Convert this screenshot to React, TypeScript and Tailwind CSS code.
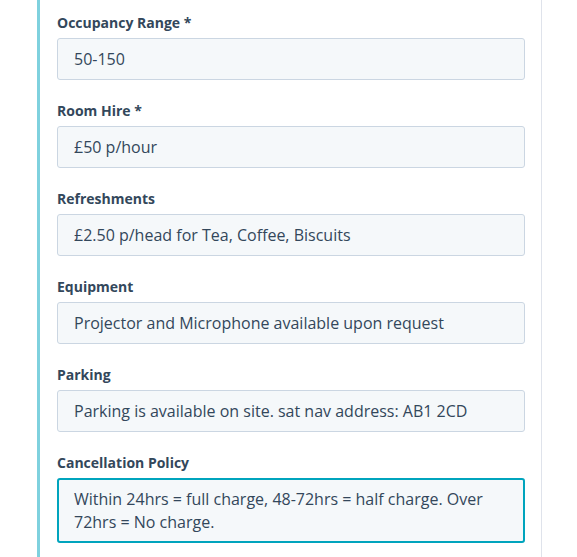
import React from "react";

const fields: { label: string; value: string }[] = [
  { label: "Occupancy Range *", value: "50-150" },
  { label: "Room Hire *", value: "£50 p/hour" },
  { label: "Refreshments", value: "£2.50 p/head for Tea, Coffee, Biscuits" },
  { label: "Equipment", value: "Projector and Microphone available upon request" },
  { label: "Parking", value: "Parking is available on site. sat nav address: AB1 2CD" },
];

export default function App() {
  return (
    <div
      className="w-[577px] h-[557px] bg-white flex overflow-hidden"
      style={{ fontFamily: "'Open Sans', 'Noto Sans', sans-serif" }}
    >
      <div className="w-[37px] shrink-0" />
      <div className="w-[3px] shrink-0 bg-[#7fd1de]" />
      <div className="w-[502px] shrink-0 border-r border-[#dfe3eb] pl-[17px] pr-[16px] pt-[13px]">
        {fields.map((f) => (
          <div key={f.label} className="mb-[21px]">
            <div className="h-[20px] leading-[20px] text-[14px] font-bold text-[#33475b] mb-[5px]">
              {f.label}
            </div>
            <div className="h-[42px] rounded-[3px] border border-[#cbd6e2] bg-[#f5f8fa] px-[16px] flex items-center text-[16px] text-[#33475b]">
              {f.value}
            </div>
          </div>
        ))}
        <div>
          <div className="h-[20px] leading-[20px] text-[14px] font-bold text-[#33475b] mb-[5px]">
            Cancellation Policy
          </div>
          <div className="h-[65px] rounded-[3px] border-2 border-[#00a4bd] bg-[#f5f8fa] pl-[15px] pr-[12px] pt-[8px] text-[16px] leading-[23px] text-[#33475b]">
            Within 24hrs = full charge, 48-72hrs = half charge. Over 72hrs = No charge.
          </div>
        </div>
      </div>
    </div>
  );
}
